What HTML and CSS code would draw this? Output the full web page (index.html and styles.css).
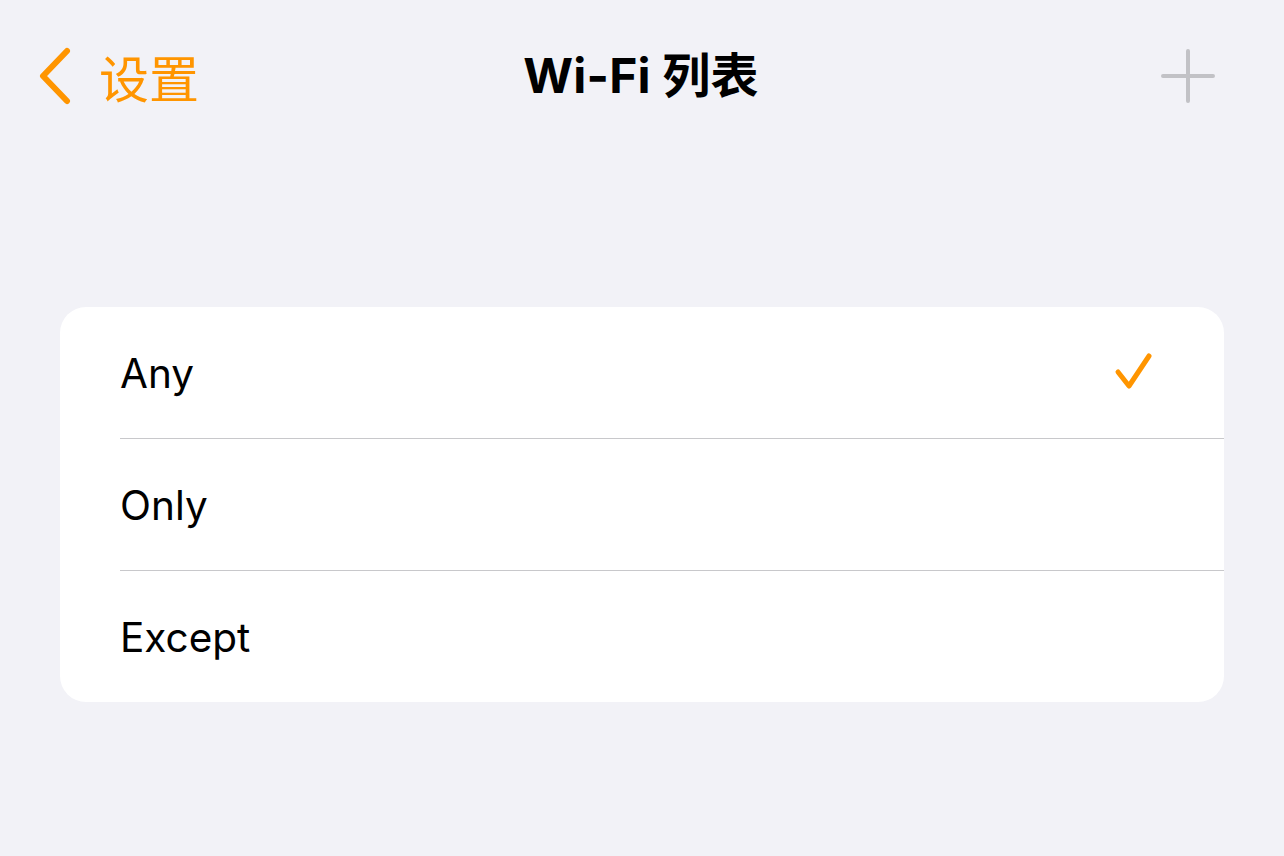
FILE: index.html
```html
<!DOCTYPE html>
<html lang="zh">
<head>
<meta charset="utf-8">
<link rel="stylesheet" href="styles.css">
</head>
<body>
<div class="screen">
  <header class="nav">
    <div class="nav-left">
      <svg class="chev" width="40" height="60" viewBox="0 0 40 60">
        <path d="M31 4 L7 29 L31 54" fill="none" stroke="#ff9500" stroke-width="6" stroke-linecap="round" stroke-linejoin="round"/>
      </svg>
      <span class="back-label">设置</span>
    </div>
    <h1 class="title">Wi-Fi 列表</h1>
    <div class="nav-right">
      <svg width="56" height="56" viewBox="0 0 56 56">
        <path d="M28 3 V53 M3 28 H53" fill="none" stroke="#c2c2c6" stroke-width="4" stroke-linecap="round"/>
      </svg>
    </div>
  </header>
  <main class="content">
    <ul class="list">
      <li class="row"><span class="label">Any</span>
        <svg class="check" width="44" height="44" viewBox="0 0 44 44">
          <path d="M5 21 L16 35 L36 5" fill="none" stroke="#ff9500" stroke-width="5" stroke-linecap="round" stroke-linejoin="round"/>
        </svg>
      </li>
      <li class="row"><span class="label">Only</span></li>
      <li class="row"><span class="label">Except</span></li>
    </ul>
  </main>
</div>
</body>
</html>
```
FILE: styles.css
```css
html, body {
  margin: 0;
  padding: 0;
  background: #f2f2f7;
}
body {
  font-family: "Inter", "Noto Sans", "Noto Sans CJK SC", sans-serif;
  color: #000;
  width: 1284px;
  height: 856px;
  overflow: hidden;
}
.nav {
  display: grid;
  grid-template-columns: 1fr auto 1fr;
  align-items: center;
  height: 80px;
  padding: 36px 40px 0 36px;
}
.nav-left {
  display: flex;
  align-items: center;
  gap: 23px;
}
.chev {
  display: block;
  margin-top: 1px;
}
.back-label {
  font-family: "Noto Sans CJK SC", sans-serif;
  font-size: 50px;
  color: #ff9500;
  line-height: 1;
}
.title {
  margin: 0;
  font-size: 48px;
  font-weight: 700;
  font-family: "Inter", "Noto Sans CJK SC", sans-serif;
  line-height: 1;
  letter-spacing: 0.2px;
  padding-left: 2px;
}
.nav-right {
  display: flex;
  justify-content: flex-end;
  padding-right: 28px;
}
.nav-right svg { display: block; }
.content {
  padding: 191px 60px 0 60px;
}
.list {
  list-style: none;
  margin: 0;
  padding: 0;
  background: #fff;
  border-radius: 26px;
  overflow: hidden;
}
.row {
  height: 131px;
  display: flex;
  align-items: center;
  justify-content: space-between;
  margin-left: 60px;
  padding-right: 67px;
  border-bottom: 1px solid #c8c8cb;
}
.row:last-child { border-bottom: none; }
.label {
  font-size: 40.5px;
  line-height: 1;
  padding-top: 4px;
}
.check { display: block; }
```
